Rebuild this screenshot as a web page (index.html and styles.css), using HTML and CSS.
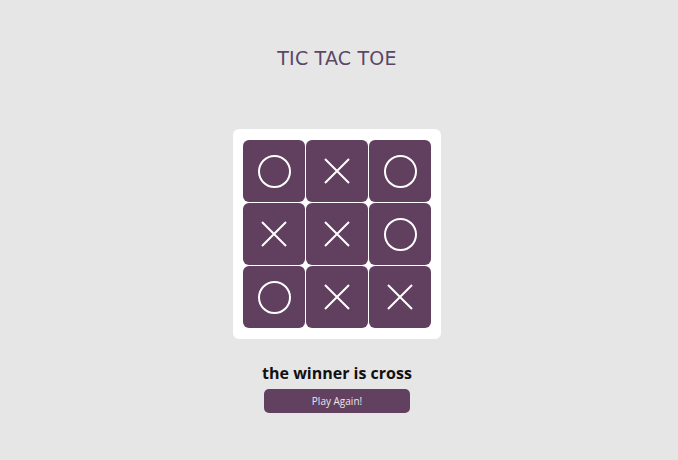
FILE: index.html
```html
<!DOCTYPE html>
<html>
<head>
<meta charset="utf-8">
<link rel="stylesheet" href="styles.css">
</head>
<body>
<div class="page">
  <h1 class="title">TIC TAC TOE</h1>
  <div class="board">
    <div class="cell"><span class="o"></span></div>
    <div class="cell"><svg class="x" viewBox="0 0 26 26"><path d="M1 1L25 25M25 1L1 25"/></svg></div>
    <div class="cell"><span class="o"></span></div>
    <div class="cell"><svg class="x" viewBox="0 0 26 26"><path d="M1 1L25 25M25 1L1 25"/></svg></div>
    <div class="cell"><svg class="x" viewBox="0 0 26 26"><path d="M1 1L25 25M25 1L1 25"/></svg></div>
    <div class="cell"><span class="o"></span></div>
    <div class="cell"><span class="o"></span></div>
    <div class="cell"><svg class="x" viewBox="0 0 26 26"><path d="M1 1L25 25M25 1L1 25"/></svg></div>
    <div class="cell"><svg class="x" viewBox="0 0 26 26"><path d="M1 1L25 25M25 1L1 25"/></svg></div>
  </div>
  <p class="result">the winner is cross</p>
  <button class="again">Play Again!</button>
</div>
</body>
</html>
```
FILE: styles.css
```css
html, body {
  margin: 0;
  padding: 0;
  background: #e6e6e6;
  height: 100%;
}
.page {
  display: flex;
  flex-direction: column;
  align-items: center;
  padding-right: 4px;
  font-family: "DejaVu Sans", "Open Sans", sans-serif;
}
.title {
  margin: 47px 0 0;
  font-size: 19px;
  font-weight: 400;
  color: #5c4668;
  letter-spacing: 0.2px;
  line-height: 22px;
}
.board {
  margin-top: 60px;
  background: #ffffff;
  border-radius: 6px;
  padding: 11px 10px;
  display: grid;
  grid-template-columns: repeat(3, 62px);
  grid-auto-rows: 62px;
  gap: 1px;
}
.cell {
  background: #613f5f;
  border-radius: 6px;
  display: flex;
  align-items: center;
  justify-content: center;
}
.o {
  width: 29px;
  height: 29px;
  border: 2px solid #ffffff;
  border-radius: 50%;
}
.x {
  width: 26px;
  height: 26px;
  fill: none;
  stroke: #ffffff;
  stroke-width: 2;
}
.result {
  margin: 24px 0 0;
  font-family: "Open Sans", "DejaVu Sans", sans-serif;
  font-size: 16px;
  font-weight: 700;
  color: #111111;
  line-height: 20px;
}
.again {
  margin-top: 6px;
  width: 146px;
  height: 24px;
  border: none;
  border-radius: 5px;
  background: #62405f;
  color: #ece6ed;
  font-family: "Open Sans", "DejaVu Sans", sans-serif;
  font-size: 10px;
  font-weight: 500;
  padding: 0;
}
```
